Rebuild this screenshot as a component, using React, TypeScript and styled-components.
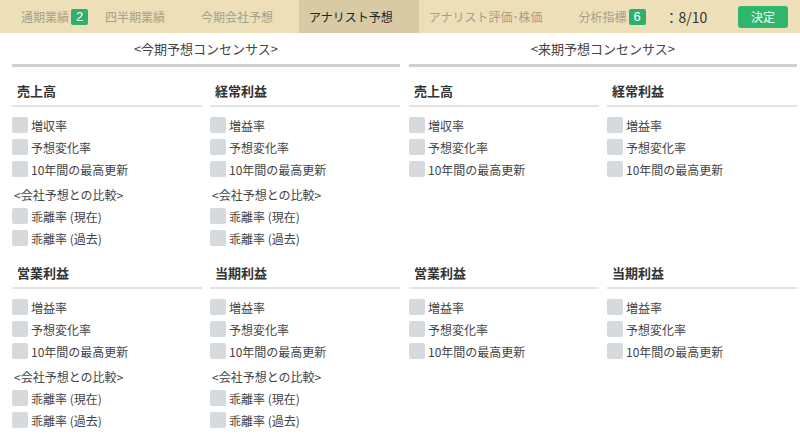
import React from "react";
import styled, { createGlobalStyle } from "styled-components";

const Global = createGlobalStyle`
  html, body { margin: 0; padding: 0; background: #fff; }
  body { font-family: "Noto Sans CJK JP", "Noto Sans", sans-serif; color: #444; }
  * { box-sizing: border-box; }
`;

const Page = styled.div`
  width: 800px;
  height: 438px;
  overflow: hidden;
  background: #fff;
`;

const Header = styled.div`
  display: flex;
  align-items: center;
  height: 33px;
  background: #ede0b9;
  padding-left: 11px;
  padding-right: 12px;
`;

const Tab = styled.div<{ $active?: boolean }>`
  display: flex;
  align-items: center;
  height: 33px;
  padding: 0 26px 0 10px;
  font-size: 12px;
  color: ${(p) => (p.$active ? "#222" : "#a59e8b")};
  background: ${(p) => (p.$active ? "#d7caa4" : "transparent")};
  white-space: nowrap;
`;

const TabLabel = styled.span`
  position: relative;
  line-height: 16px;
`;

const Badge = styled.span`
  position: absolute;
  left: calc(100% + 2px);
  top: 0;
  width: 17px;
  height: 16px;
  border-radius: 2px;
  background: #2eb06c;
  color: #fff;
  font-family: "Liberation Sans", sans-serif;
  font-size: 13px;
  line-height: 16px;
  text-align: center;
`;

const Count = styled.div`
  margin-left: 12px;
  font-size: 14px;
  color: #333;
  white-space: nowrap;
`;

const Spacer = styled.div`
  flex: 1;
`;

const Decide = styled.button`
  width: 50px;
  height: 22px;
  border: none;
  border-radius: 3px;
  background: #2db66c;
  color: #fff;
  font-family: inherit;
  font-size: 12px;
  padding: 0;
  cursor: pointer;
`;

const Main = styled.div`
  display: grid;
  grid-template-columns: 1fr 1fr;
  column-gap: 9px;
  padding: 0 3px 0 12px;
`;

const Half = styled.section`
  display: flex;
  flex-direction: column;
`;

const Title = styled.div`
  height: 34px;
  line-height: 31px;
  text-align: center;
  font-size: 13px;
  color: #444;
  border-bottom: 3px solid #cfcfcf;
`;

const BlockGrid = styled.div`
  display: grid;
  grid-template-columns: 1fr 1fr;
  column-gap: 8px;
`;

const Block = styled.div`
  min-height: 182px;
`;

const Heading = styled.div`
  padding: 14px 5px 4px;
  line-height: 20px;
  font-size: 13px;
  font-weight: bold;
  color: #333;
  border-bottom: 2px solid #e3e3e3;
`;

const Rows = styled.div`
  padding-top: 7px;
  display: flex;
  flex-direction: column;
`;

const Row = styled.label`
  display: flex;
  align-items: center;
  height: 22px;
  font-size: 12px;
  color: #444;
`;

const Box = styled.span`
  width: 16px;
  height: 16px;
  border-radius: 2px;
  background: #d6dadd;
  margin-right: 3px;
  flex: none;
`;

const Compare = styled.div`
  height: 25px;
  padding: 5px 0 0 2px;
  line-height: 20px;
  font-size: 12px;
  color: #444;
`;

type BlockData = { title: string; first: string; compare: boolean };

const current: BlockData[] = [
  { title: "売上高", first: "増収率", compare: true },
  { title: "経常利益", first: "増益率", compare: true },
  { title: "営業利益", first: "増益率", compare: true },
  { title: "当期利益", first: "増益率", compare: true },
];

const next: BlockData[] = current.map((b) => ({ ...b, compare: false }));

function Item({ text }: { text: string }) {
  return (
    <Row>
      <Box />
      {text}
    </Row>
  );
}

function MetricBlock({ data }: { data: BlockData }) {
  return (
    <Block>
      <Heading>{data.title}</Heading>
      <Rows>
        <Item text={data.first} />
        <Item text="予想変化率" />
        <Item text="10年間の最高更新" />
        {data.compare && (
          <>
            <Compare>&lt;会社予想との比較&gt;</Compare>
            <Item text="乖離率 (現在)" />
            <Item text="乖離率 (過去)" />
          </>
        )}
      </Rows>
    </Block>
  );
}

export default function App() {
  return (
    <Page>
      <Global />
      <Header>
        <Tab>
          <TabLabel>
            通期業績<Badge>2</Badge>
          </TabLabel>
        </Tab>
        <Tab>
          <TabLabel>四半期業績</TabLabel>
        </Tab>
        <Tab>
          <TabLabel>今期会社予想</TabLabel>
        </Tab>
        <Tab $active>
          <TabLabel>アナリスト予想</TabLabel>
        </Tab>
        <Tab>
          <TabLabel>アナリスト評価･株価</TabLabel>
        </Tab>
        <Tab>
          <TabLabel>
            分析指標<Badge>6</Badge>
          </TabLabel>
        </Tab>
        <Count>：8/10</Count>
        <Spacer />
        <Decide>決定</Decide>
      </Header>
      <Main>
        <Half>
          <Title>&lt;今期予想コンセンサス&gt;</Title>
          <BlockGrid>
            {current.map((b) => (
              <MetricBlock key={b.title} data={b} />
            ))}
          </BlockGrid>
        </Half>
        <Half>
          <Title>&lt;来期予想コンセンサス&gt;</Title>
          <BlockGrid>
            {next.map((b) => (
              <MetricBlock key={b.title} data={b} />
            ))}
          </BlockGrid>
        </Half>
      </Main>
    </Page>
  );
}
